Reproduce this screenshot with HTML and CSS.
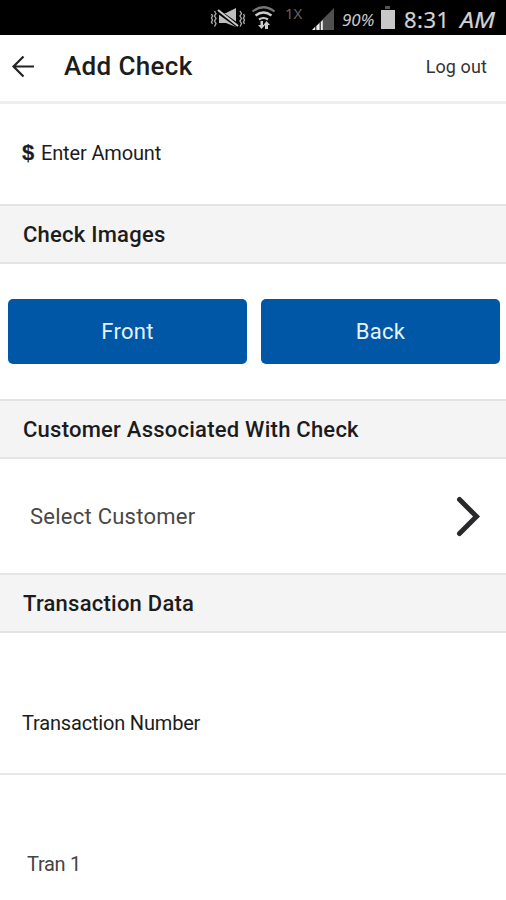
FILE: index.html
```html
<!DOCTYPE html>
<html lang="en">
<head>
<meta charset="utf-8">
<title>Add Check</title>
<link rel="stylesheet" href="styles.css">
</head>
<body>
<div class="status">
  <svg class="status-icons" width="138" height="35" viewBox="0 0 138 35">
    <path d="M4.500 11l1.500 2.500-1.500 2.500 1.500 2.500-1.500 2.500 1.500 2.500-1.500 3M1.500 14l1 2-1 2 1 2-1 2 1 2M30 11l1.500 2.500-1.500 2.500 1.500 2.500-1.500 2.500 1.500 2.500-1.500 3M33.500 14l1 2-1 2 1 2-1 2 1 2" fill="none" stroke="#a8a8a8" stroke-width="1.400"/>
    <path d="M9 13h7l10-5v19l-10-4H9z" fill="#bdbdbd"/>
    <path d="M7 10.500l22 16" stroke="#000" stroke-width="4.500"/>
    <path d="M8 10l20 16" stroke="#ccc" stroke-width="2"/>
    <g fill="none" stroke-width="2.200">
      <path d="M42.500 11.500q11-8.500 22 0" stroke="#777"/>
      <path d="M45.500 15.500q8-6 16 0M49 19.500q4.500-3 9 0" stroke="#ccc"/>
    </g>
    <path d="M50.500 21h2.500v4h2l-3.500 4-3.500-4h2.500zM55 29v-4h-1.500l3-4 3.500 4h-2v4z" fill="#ccc"/>
    <path d="M124 8v22h-22z" fill="#505050"/>
    <path d="M102 30l3-3v3zM106.500 30v-4l3-3v7zM111 30v-8l1.800-2v10z" fill="#eee"/>
  </svg>
  <span class="network">1X</span>
  <span class="percent">90%</span>
  <svg class="battery" width="16" height="24" viewBox="0 0 16 24"><path d="M5 0h5v3H5z" fill="#555"/><path d="M1 4h14v19H1z" fill="#c8c8c8"/></svg>
  <svg class="clock" width="96" height="35" viewBox="0 0 96 35"><text class="clock-text digits" x="0" y="28" textLength="45" lengthAdjust="spacing">8:31</text><text class="clock-text" x="56" y="28" textLength="35" lengthAdjust="spacingAndGlyphs">AM</text></svg>
</div>
<header class="header">
  <svg class="back" width="24" height="24" viewBox="0 0 24 24"><path d="M23 12.500H2M12.500 2.500l-10 10 10 10" fill="none" stroke="#222" stroke-width="2.200"/></svg>
  <h1 class="title">Add Check</h1>
  <a class="logout">Log out</a>
</header>
<main>
  <div class="amount"><b class="dollar">$</b><span class="enter">Enter Amount</span></div>
  <h2 class="section">Check Images</h2>
  <div class="buttons"><button class="button">Front</button><button class="button">Back</button></div>
  <h2 class="section">Customer Associated With Check</h2>
  <div class="customer"><span>Select Customer</span>
    <svg width="26" height="42" viewBox="0 0 26 42"><path d="M4.500 4.500l17 17L4.500 38.500" fill="none" stroke="#29292c" stroke-width="5" stroke-linecap="round"/></svg>
  </div>
  <h2 class="section">Transaction Data</h2>
  <div class="number">Transaction Number</div>
  <div class="tran">Tran 1</div>
</main>
</body>
</html>
```
FILE: styles.css
```css
* { box-sizing: border-box; }
body { margin: 0; height: 900px; overflow: hidden; background: #fff; color: #1c1c1c; font-family: Roboto, sans-serif; }
.status { display: flex; height: 35px; background: #000; color: #c8c8c8; padding-left: 210px; }
.status svg { flex: none; }
.status-icons { margin-right: -63px; }
.network { width: 19px; flex: none; margin-top: 4px; font: 15px/19px "Noto Sans", sans-serif; color: #626262; }
.percent { width: 36px; flex: none; margin-left: 38px; margin-top: 9px; font: italic 17px/21px "Noto Sans", sans-serif; }
.battery { margin: 6px 8px 0 2px; }
.clock-text { font: italic 22px "Noto Sans", sans-serif; fill: #d2d2d2; stroke: #d2d2d2; stroke-width: .2; }
.digits { font-style: normal; }
.header { display: flex; align-items: center; height: 69px; border-bottom: 3px solid #eee; padding: 0 19px 4px 11px; }
.title { margin: 0 0 0 29px; font-size: 26px; line-height: 32px; font-weight: 500; letter-spacing: .35px; }
.logout { margin-left: auto; font-size: 18px; letter-spacing: .1px; color: #333; }
.amount { display: flex; align-items: center; height: 100px; padding: 0 22px 2px; }
.dollar { width: 19px; font: 700 22px "Liberation Sans", sans-serif; -webkit-text-stroke: .2px; }
.enter { font-size: 20px; letter-spacing: -.15px; }
.section { display: flex; align-items: center; height: 60px; margin: 0; padding: 0 23px; background: #f4f4f4; border-top: 2px solid #e4e4e4; border-bottom: 2px solid #e4e4e4; font-size: 22px; font-weight: 500; letter-spacing: .24px; }
.buttons { display: flex; gap: 14px; height: 135px; padding: 35px 6px 35px 8px; }
.button { flex: 1; border: 0; border-radius: 5px; background: #0057a6; color: #e8f2fc; font: 400 22px Roboto, sans-serif; letter-spacing: .3px; }
.customer { display: flex; align-items: center; justify-content: space-between; height: 114px; padding: 0 25px 0 30px; font-size: 22px; letter-spacing: .25px; color: #484848; }
.number { height: 142px; border-bottom: 2px solid #e8e8e8; padding: 78px 22px 0; font-size: 20px; line-height: 24px; letter-spacing: -.18px; }
.tran { padding: 77px 27px 0; font-size: 20px; line-height: 24px; letter-spacing: -.3px; color: #444; }
```
